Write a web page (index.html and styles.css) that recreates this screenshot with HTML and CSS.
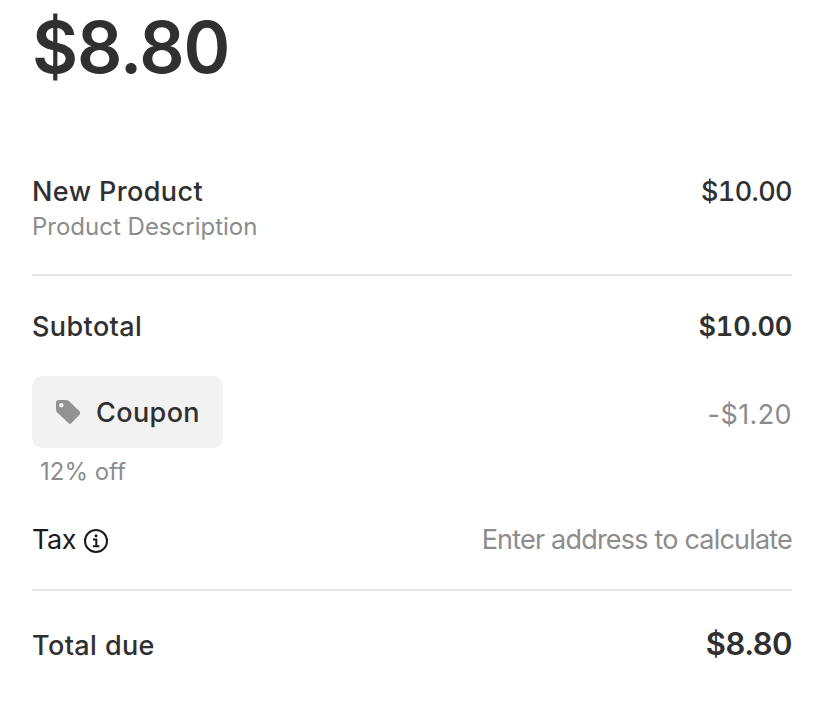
FILE: index.html
```html
<!DOCTYPE html>
<html lang="en">
<head>
    <meta charset="UTF-8">
    <meta name="viewport" content="width=device-width, initial-scale=1.0">
    <title>Order Summary</title>
    <link rel="stylesheet" href="styles.css">
</head>
<body>
    <main class="summary">
        <h1 class="amount">$8.80</h1>

        <section class="row product">
            <div>
                <div class="name">New Product</div>
                <div class="description">Product Description</div>
            </div>
            <div class="price">$10.00</div>
        </section>

        <section class="totals">
            <div class="row subtotal">
                <span class="subtotal-label">Subtotal</span>
                <span class="subtotal-value">$10.00</span>
            </div>
            <div class="row coupon-row">
                <div class="coupon">
                    <svg class="tag" viewBox="0 0 24 24"><path fill-rule="evenodd" d="M0 3a3 3 0 0 1 3-3h7q2 0 3.500 1.400l10.200 10q1.300 1.600 0 3l-8.500 8.800q-1.200 1.400-2.600 0L1.300 12.500Q0 11.300 0 9.500zM5.300 3a2.300 2.300 0 1 0 0 4.600 2.300 2.300 0 0 0 0-4.600z"/></svg>
                    <span class="coupon-label">Coupon</span>
                </div>
                <span class="discount">-$1.20</span>
            </div>
            <div class="off">12% off</div>
            <div class="row tax">
                <div class="tax-label">
                    <span class="tax-text">Tax</span>
                    <svg class="info" viewBox="0 0 24 24"><circle cx="12" cy="12" r="11"/><path d="M9 10.500h3.300v6.500M8.800 17.200h6.600"/><circle class="dot" cx="12" cy="6.800" r="1.500"/></svg>
                </div>
                <span class="tax-value">Enter address to calculate</span>
            </div>
        </section>

        <section class="row total">
            <span class="total-label">Total due</span>
            <span class="total-value">$8.80</span>
        </section>
    </main>
</body>
</html>
```

FILE: styles.css
```css
body {
    margin: 0;
    background: #fff;
    color: #303031;
    font-family: Inter, "Liberation Sans", sans-serif;
    font-size: 27px;
    line-height: 36px;
    font-weight: 470;
    letter-spacing: 0.4px;
}
.summary {
    padding: 0 46px 0 32px;
}
.row {
    display: flex;
    justify-content: space-between;
}
.amount {
    margin: 0;
    padding-top: 4px;
    font-size: 71px;
    line-height: 86px;
    font-weight: 600;
    letter-spacing: -1.2px;
}
.product {
    height: 100px;
    margin-top: 84px;
    border-bottom: 2px solid #e6e6e6;
}
.description, .off {
    font-size: 24px;
    font-weight: 380;
    letter-spacing: 0;
    color: #8c8c8d;
}
.description {
    line-height: 34px;
}
.price, .subtotal-value {
    font-variant-numeric: tabular-nums;
    letter-spacing: -0.2px;
}
.price {
    letter-spacing: -0.6px;
}
.totals {
    box-sizing: border-box;
    height: 315px;
    padding-top: 33px;
    border-bottom: 2px solid #e6e6e6;
}
.subtotal-value {
    font-weight: 600;
}
.coupon-row {
    margin-top: 31px;
    align-items: center;
}
.coupon {
    display: flex;
    align-items: center;
    box-sizing: border-box;
    width: 191px;
    height: 72px;
    padding-left: 24px;
    border-radius: 10px;
    background: #f2f2f2;
}
.coupon-label {
    padding-top: 1px;
}
.tag {
    width: 24px;
    height: 24px;
    margin-right: 16px;
    fill: #929292;
}
.discount, .tax-value {
    font-weight: 380;
    color: #8c8c8d;
}
.discount {
    padding-top: 5px;
}
.off {
    margin: 6px 0 0 8px;
}
.tax {
    margin-top: 32px;
}
.tax-label {
    display: flex;
    align-items: center;
    color: #1a1a1a;
    font-weight: 430;
    letter-spacing: -0.4px;
}
.tax-value {
    letter-spacing: -0.8px;
}
.info {
    width: 24px;
    height: 24px;
    margin: 2px 0 0 8px;
    fill: none;
    stroke: #1a1a1a;
    stroke-width: 2;
}
.info .dot {
    fill: #1a1a1a;
    stroke: none;
}
.total {
    padding-top: 36px;
}
.total-label {
    padding-top: 1px;
}
.total-value {
    font-size: 31px;
    line-height: 34px;
    font-weight: 600;
    letter-spacing: -0.5px;
}
```
